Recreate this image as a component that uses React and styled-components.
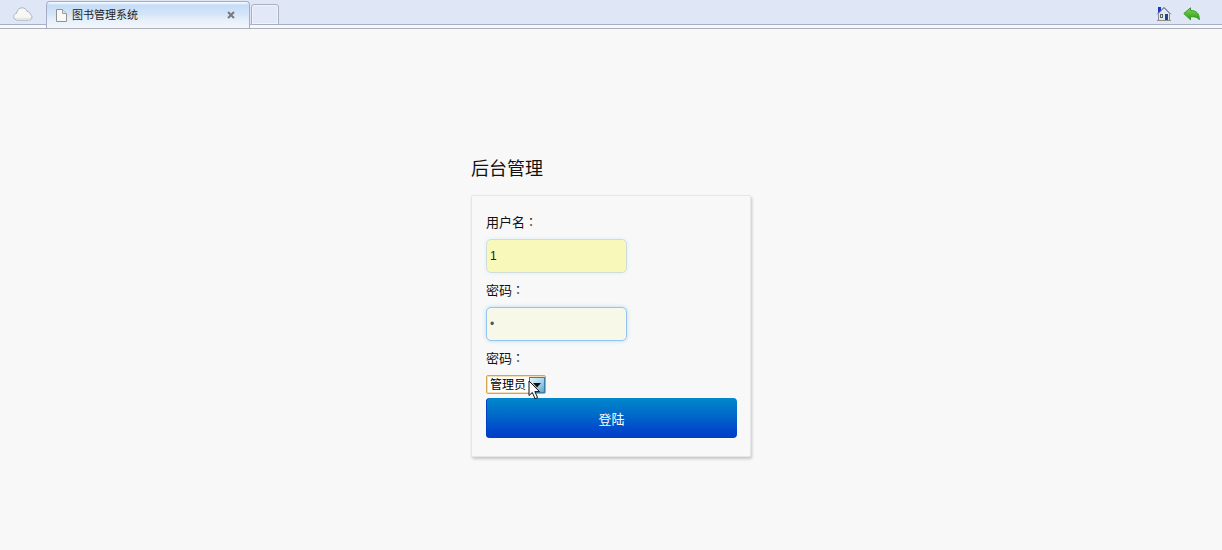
import React from "react";
import styled, { createGlobalStyle, css } from "styled-components";

const GlobalStyle = createGlobalStyle`
  * { box-sizing: border-box; }
  body {
    margin: 0;
    background: #f8f8f8;
    color: #111;
    font-family: "Liberation Sans", "Noto Sans CJK SC", sans-serif;
    font-size: 13px;
  }
  button, input, select { font-family: inherit; }
`;

const TabBar = styled.header`
  display: flex;
  align-items: flex-end;
  height: 29px;
  background: linear-gradient(#dfe6f6 0 24px, #a6b0c8 24px 25px, #f6f9fd 25px 28px, #adafb8 28px 29px);
`;

const BarButton = styled.button`
  display: flex;
  align-items: center;
  justify-content: center;
  width: 28px;
  height: 24px;
  margin-bottom: 4px;
  padding: 2px 0 0;
  border: 0;
  background: none;
`;

const CloudSlot = styled.div`
  display: flex;
  width: 46px;
  padding-left: 9px;
`;

const Tab = styled.div`
  display: flex;
  align-items: center;
  width: 204px;
  height: 27px;
  margin-bottom: 1px;
  padding: 0 12px 0 9px;
  border: 1px solid #a3aec6;
  border-bottom: 0;
  border-radius: 4px 4px 0 0;
  background: linear-gradient(#f2f8fe 0 1px, #c4dcf7 3px, #d4e5f8 12px, #e7eff9 18px, #f3f7fc);
`;

const TabTitle = styled.span`
  flex: 1;
  margin-left: 5px;
  font-size: 11px;
  line-height: 16px;
  color: #222;
`;

const CloseButton = styled.button`
  display: flex;
  padding: 2px;
  border: 0;
  background: none;
`;

const NewTab = styled.button`
  width: 28px;
  height: 21px;
  margin: 0 0 4px 1px;
  border: 1px solid #a9afc0;
  border-radius: 3px 3px 0 0;
  background: #e2e8f7;
  box-shadow: inset 0 0 0 1px #f0f3fb;
`;

const BarActions = styled.nav`
  display: flex;
  margin-left: auto;
  padding-right: 16px;
`;

const Page = styled.main`
  width: 280px;
  margin: 0 auto;
  padding: 127px 0 40px;
`;

const Title = styled.h1`
  margin: 0 0 13px;
  font-size: 18px;
  font-weight: 400;
  line-height: 26px;
`;

const Card = styled.form`
  display: flex;
  flex-direction: column;
  align-items: flex-start;
  padding: 17px 13px 18px 14px;
  border: 1px solid #e6e6e6;
  border-radius: 2px;
  box-shadow: 1px 2px 3px #c6c6c6;
  background: #f8f8f8;
`;

const Label = styled.label`
  height: 20px;
  margin-bottom: 6px;
  line-height: 20px;
`;

const Colon = styled.span`
  font-family: "Noto Sans CJK TC", sans-serif;
  font-size: 12px;
  line-height: 1;
`;

const TextInput = styled.input`
  width: 141px;
  height: 34px;
  margin-bottom: 8px;
  padding: 0 3px;
  border: 1px solid #d0dcd8;
  border-radius: 5px;
  outline: 0;
  background: #f8f8ba;
  color: #222;
  font-size: 12px;
  box-shadow: 0 0 4px #dceffb;
  ${(p) => p.$active && css`
    border-color: #93c6ec;
    background: #f8f8e8;
    box-shadow: 0 0 4px #b5dcf6;
  `}
  &[type="password"] { font-size: 12px; color: #456; }
`;

const SelectBox = styled.div`
  position: relative;
  width: 60px;
  height: 19px;
  margin-bottom: 4px;
`;

const Select = styled.select`
  appearance: none;
  display: block;
  width: 100%;
  height: 100%;
  padding: 1px 16px 0 3px;
  border: 1px solid #d5a64e;
  border-radius: 2px;
  outline: 0;
  background: #fff;
  box-shadow: inset 0 0 0 1px #f3dfb6;
  color: #000;
  font-size: 12px;
  line-height: 16px;
`;

const SelectArrow = styled.span`
  position: absolute;
  top: 2px;
  right: 1px;
  display: flex;
  align-items: center;
  justify-content: center;
  width: 16px;
  height: 16px;
  border: 1px solid #3b7fa8;
  background: linear-gradient(135deg, #e4f3fb, #a5d3eb 55%, #5fa5cb);
  pointer-events: none;
`;

const Pointer = styled.svg`
  position: absolute;
  top: 5px;
  left: 42px;
  z-index: 1;
  pointer-events: none;
`;

const SubmitButton = styled.button`
  align-self: stretch;
  height: 40px;
  padding: 0;
  border: 0;
  border-radius: 4px;
  background: linear-gradient(#0088cc, #0068c8 45%, #0044cc 85%, #0040c4);
  box-shadow: inset 1px 0 0 #0040c0;
  color: #fff;
  font-size: 13px;
`;

const CloudIcon = () => (
  <svg width="20" height="14" viewBox="0 0 20 14">
    <path d="M5 13.2C2.5 13.2.7 11.8.7 9.6c0-1.7 1.2-3 2.9-3.3C4 3 6 .8 9 .8c2.4 0 4.3 1.2 5 3.5 2.1.2 3.2 1.5 3.3 3.2 1.1.5 1.6 1.4 1.6 2.5 0 2-1.5 3.2-3.5 3.2z" fill="#f7f7f6" stroke="#a9b5c0" />
    <path d="M4 12.4h12c1.2 0 2-.6 2.2-1.6H2.2c.2.9.8 1.4 1.8 1.6z" fill="#e6e7e8" />
  </svg>
);

const PageIcon = () => (
  <svg width="11" height="13" viewBox="0 0 11 13">
    <path d="M.5.5h6l4 4v8H.5z" fill="#f8f8f6" stroke="#929292" />
    <path d="M6.5.5v4h4" fill="#e2e2e2" stroke="#a0a0a0" />
  </svg>
);

const CloseIcon = () => (
  <svg width="8" height="8" viewBox="0 0 8 8">
    <path d="M1 1l6 6M7 1L1 7" stroke="#77797b" strokeWidth="2" />
  </svg>
);

const HomeIcon = () => (
  <svg width="16" height="16" viewBox="0 0 16 16">
    <path d="M2 1h3v6H2z" fill="#1c35c8" />
    <path d="M2.500 7.500L8 2l5.500 5.500v7h-11z" fill="#e4e7ea" stroke="#868c96" />
    <path d="M1 8.300L8 1.200l7 7.100" fill="none" stroke="#7189b0" />
    <path d="M2 1h3v3L2 7z" fill="#1c35c8" />
    <path d="M4 8h3v4H4z" fill="#59616c" />
    <path d="M5 9h1v2H5z" fill="#d9e2e8" />
    <path d="M9 8h3v6H9z" fill="#17469c" />
    <path d="M1 14.500h14" stroke="#8f8f86" />
  </svg>
);

const BackIcon = () => (
  <svg width="18" height="14" viewBox="0 0 18 14">
    <defs>
      <linearGradient id="leaf" x1="0" y1="0" x2="0" y2="1">
        <stop offset="0" stopColor="#7ed64e" />
        <stop offset="1" stopColor="#2c9d18" />
      </linearGradient>
    </defs>
    <path d="M.8 6.500L7.500.8v2.600c5.500 0 9 2.800 8.800 9.400-1.500-2.600-4.300-3.300-8.800-3.100v3.100z" fill="url(#leaf)" stroke="#359c22" strokeLinejoin="round" />
  </svg>
);

export default function App() {
  return (
    <>
      <GlobalStyle />
      <TabBar>
        <CloudSlot>
          <BarButton type="button" aria-label="Cloud"><CloudIcon /></BarButton>
        </CloudSlot>
        <Tab>
          <PageIcon />
          <TabTitle>图书管理系统</TabTitle>
          <CloseButton type="button" aria-label="Close tab"><CloseIcon /></CloseButton>
        </Tab>
        <NewTab type="button" aria-label="New tab" />
        <BarActions>
          <BarButton type="button" aria-label="Home"><HomeIcon /></BarButton>
          <BarButton type="button" aria-label="Back"><BackIcon /></BarButton>
        </BarActions>
      </TabBar>
      <Page>
        <Title>后台管理</Title>
        <Card onSubmit={(e) => e.preventDefault()}>
          <Label htmlFor="user">用户名<Colon>：</Colon></Label>
          <TextInput id="user" type="text" defaultValue="1" />
          <Label htmlFor="password">密码<Colon>：</Colon></Label>
          <TextInput id="password" type="password" defaultValue="1" $active />
          <Label htmlFor="role">密码<Colon>：</Colon></Label>
          <SelectBox>
            <Select id="role" defaultValue="admin">
              <option value="admin">管理员</option>
            </Select>
            <SelectArrow>
              <svg width="8" height="5" viewBox="0 0 8 5"><path d="M0 0h8L4 4.500z" fill="#111" /></svg>
            </SelectArrow>
            <Pointer width="13" height="20" viewBox="0 0 13 20">
              <path d="M1 1v14.500l3.300-3 2.800 6.200 2.500-1.100-2.800-6H11.500z" fill="#fff" stroke="#111" />
            </Pointer>
          </SelectBox>
          <SubmitButton type="submit">登陆</SubmitButton>
        </Card>
      </Page>
    </>
  );
}
